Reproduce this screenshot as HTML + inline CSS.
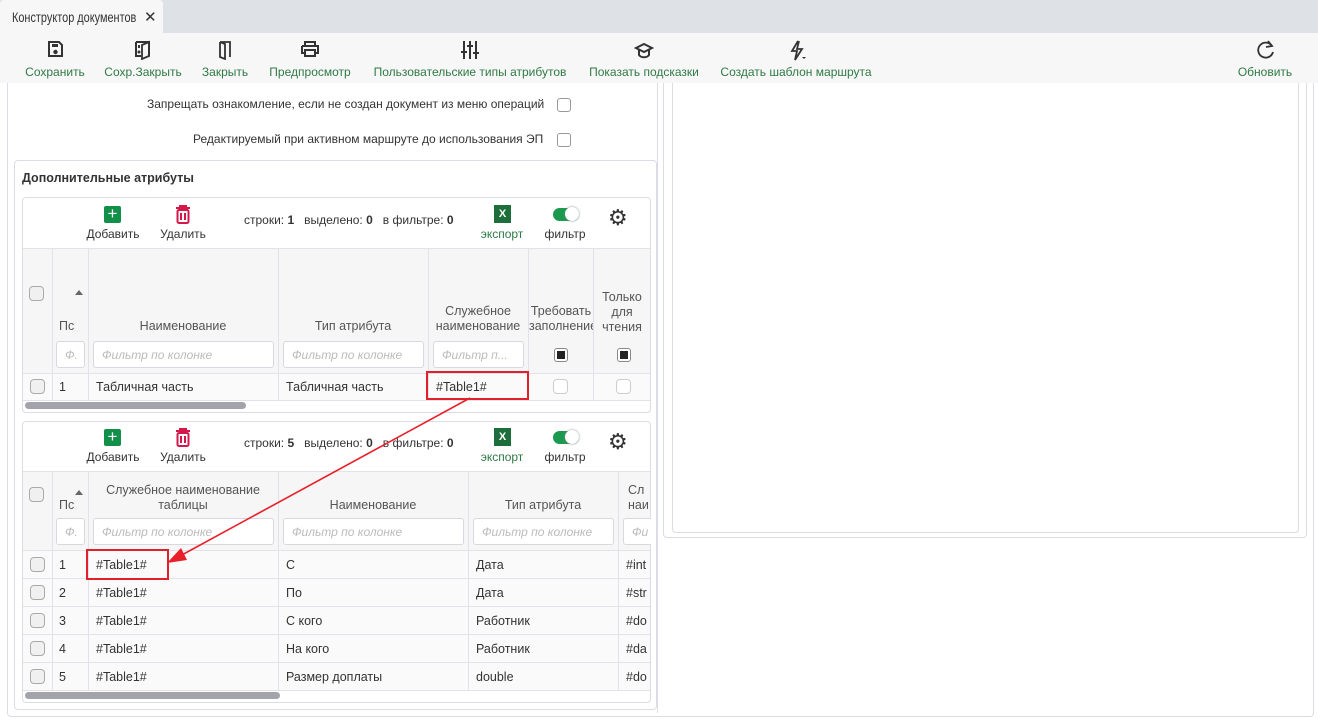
<!DOCTYPE html>
<html><head><meta charset="utf-8">
<style>
*{box-sizing:border-box;margin:0;padding:0}
body{width:1318px;height:720px;position:relative;overflow:hidden;background:#fff;font-family:"Liberation Sans","DejaVu Sans",sans-serif;font-size:12.5px;color:#333}
.a{position:absolute}
.tb{position:absolute;top:65px;color:#2f7a45;font-size:12px;white-space:nowrap;transform:translateX(-50%)}
.ic{position:absolute;top:40px;transform:translateX(-50%)}
.box{position:absolute;border:1px solid #dcdce6;border-radius:4px}
.cb{position:absolute;width:14px;height:14px;border:1px solid #999;border-radius:3px;background:#fff}
.gcb{position:absolute;width:15px;height:15px;border:1px solid #aaa;border-radius:4px;background:#f0f0f0}
.vl{position:absolute;width:1px;background:#e2e2e8}
.hl{position:absolute;height:1px;background:#e2e2e8}
.t{position:absolute;white-space:nowrap}
.hc{position:absolute;text-align:center;color:#555;line-height:15px;overflow:hidden;white-space:nowrap}
.fi{position:absolute;height:27px;border:1px solid #d8d8e0;border-radius:3px;background:#fff;color:#bbb;font-style:italic;font-size:12px;padding:6px 8px;overflow:hidden;white-space:nowrap}
.lbl{position:absolute;font-size:12px;transform:translateX(-50%);white-space:nowrap}
.bk{position:absolute;width:14px;height:14px;border:1px solid #888;border-radius:3px;background:#fff}
.bk::after{content:"";position:absolute;left:2px;top:2px;width:8px;height:8px;background:#222}
</style></head><body>
<!-- tab bar -->
<div class="a" style="left:0;top:0;width:1318px;height:33px;background:#dee1e6"></div>
<div class="a" style="left:0;top:0;width:163px;height:33px;background:#f7f7f7;border-radius:4px 4px 0 0"></div>
<div class="t" style="left:12px;top:9px;font-size:14px;color:#333;transform:scaleX(0.78);transform-origin:left">Конструктор документов</div>
<div class="t" style="left:144px;top:8px;font-size:15px;font-weight:bold;color:#333">✕</div>
<!-- outer panels -->
<div class="box" style="left:7px;top:60px;width:1307px;height:657px"></div>
<div class="box" style="left:663px;top:60px;width:644px;height:478px"></div>
<div class="box" style="left:672px;top:60px;width:627px;height:473px"></div>
<div class="vl" style="left:657px;top:83px;height:630px;background:#dcdce6"></div>
<!-- toolbar -->
<div class="a" style="left:0;top:33px;width:1318px;height:50px;background:#f7f7f7"></div>
<svg class="ic" style="left:55px" width="18" height="18" viewBox="0 0 18 18"><path d="M3 2h10l3 3v11H3z" fill="none" stroke="#333" stroke-width="2"/><rect x="6" y="4" width="6" height="3" fill="#333"/><circle cx="9.5" cy="12" r="2.2" fill="#333"/></svg>
<svg class="ic" style="left:143px" width="20" height="20" viewBox="0 0 20 20"><path d="M3 2h13v14M3 2v14h5" fill="none" stroke="#333" stroke-width="2"/><path d="M9 5l7-3v14l-7 3z" fill="none" stroke="#333" stroke-width="1.8"/><rect x="5" y="5" width="2" height="3" fill="#333"/><circle cx="6" cy="12" r="1.5" fill="#333"/></svg>
<svg class="ic" style="left:225px" width="16" height="20" viewBox="0 0 16 20"><path d="M3 2h10v15M3 2v15l5 2V4L3 2" fill="none" stroke="#333" stroke-width="1.8"/></svg>
<svg class="ic" style="left:310px" width="20" height="18" viewBox="0 0 20 18"><path d="M5 6V2h10v4M2 6h16v7h-3M5 13H2V6" fill="none" stroke="#333" stroke-width="2"/><rect x="5" y="10" width="10" height="6" fill="none" stroke="#333" stroke-width="2"/></svg>
<svg class="ic" style="left:470px" width="18" height="20" viewBox="0 0 18 20"><path d="M3 1v18M9 1v18M15 1v18" stroke="#333" stroke-width="2"/><path d="M0 12h6M6 6h6M12 13h6" stroke="#333" stroke-width="2"/></svg>
<svg class="ic" style="left:644px;top:42px" width="20" height="18" viewBox="0 0 20 18"><path d="M10 2l8 4-8 4-8-4z" fill="none" stroke="#333" stroke-width="2"/><path d="M5 8v5c2 3 8 3 10 0V8" fill="none" stroke="#333" stroke-width="2"/></svg>
<svg class="ic" style="left:798px" width="18" height="22" viewBox="0 0 18 22"><path d="M9 1L3 11h5l-2 9 7-11H8l2-8" fill="none" stroke="#333" stroke-width="1.8"/><path d="M13 17h4l-2 2z" fill="#333"/></svg>
<svg class="ic" style="left:1266px" width="20" height="20" viewBox="0 0 20 20"><path d="M16 6A7.5 7.5 0 1 0 17 12" fill="none" stroke="#333" stroke-width="1.8"/><path d="M12 1l4 5-6 1" fill="none" stroke="#333" stroke-width="1.8"/></svg>
<div class="tb" style="left:55px">Сохранить</div>
<div class="tb" style="left:143px">Сохр.Закрыть</div>
<div class="tb" style="left:225px">Закрыть</div>
<div class="tb" style="left:310px">Предпросмотр</div>
<div class="tb" style="left:470px">Пользовательские типы атрибутов</div>
<div class="tb" style="left:644px">Показать подсказки</div>
<div class="tb" style="left:796px">Создать шаблон маршрута</div>
<div class="tb" style="left:1265px">Обновить</div>
<!-- checkboxes -->
<div class="t" style="left:147px;top:97px;font-size:12px">Запрещать ознакомление, если не создан документ из меню операций</div>
<div class="cb" style="left:557px;top:98px"></div>
<div class="t" style="left:193px;top:132px;font-size:12px">Редактируемый при активном маршруте до использования ЭП</div>
<div class="cb" style="left:557px;top:133px"></div>
<!-- section -->
<div class="box" style="left:14px;top:160px;width:643px;height:550px"></div>
<div class="t" style="left:22px;top:171px;font-weight:bold;font-size:12.5px;color:#333">Дополнительные атрибуты</div>

<!-- GRID 1 -->
<div class="box" style="left:22px;top:197px;width:629px;height:216px"></div>
<div class="a" style="left:23px;top:249px;width:627px;height:124px;background:#f6f6f6"></div>
<div class="a" style="left:23px;top:374px;width:627px;height:27px;background:#fafafa"></div>
<div class="hl" style="left:23px;top:248px;width:627px"></div>
<div class="hl" style="left:23px;top:373px;width:627px"></div>
<div class="hl" style="left:23px;top:400px;width:627px"></div>
<div class="vl" style="left:52px;top:249px;height:151px"></div>
<div class="vl" style="left:88px;top:249px;height:151px"></div>
<div class="vl" style="left:278px;top:249px;height:151px"></div>
<div class="vl" style="left:428px;top:249px;height:151px"></div>
<div class="vl" style="left:528px;top:249px;height:151px"></div>
<div class="vl" style="left:593px;top:249px;height:151px"></div>
<!-- grid1 toolbar -->
<div class="a" style="left:104px;top:206px;width:17px;height:17px;background:#12904a;border-radius:2px;color:#fff;font-size:17px;line-height:16px;text-align:center">+</div>
<svg class="a" style="left:175px;top:205px" width="16" height="19" viewBox="0 0 16 19"><path d="M1 3h14M5 3V1h6v2" stroke="#d4184a" stroke-width="2" fill="none"/><rect x="2.5" y="5" width="11" height="13" rx="1.5" fill="none" stroke="#d4184a" stroke-width="2"/><path d="M6 8v7M10 8v7" stroke="#d4184a" stroke-width="2"/></svg>
<div class="lbl" style="left:113px;top:227px">Добавить</div>
<div class="lbl" style="left:183px;top:227px">Удалить</div>
<div class="t" style="left:244px;top:213px;font-size:12px">строки: <b>1</b>&nbsp;&nbsp; выделено: <b>0</b>&nbsp;&nbsp; в фильтре: <b>0</b></div>
<div class="a" style="left:494px;top:205px;width:17px;height:18px;background:#1e6e3c;color:#fff;font-size:11px;font-weight:bold;text-align:center;line-height:18px">X</div>
<div class="lbl" style="left:502px;top:227px;color:#2f7a45">экспорт</div>
<div class="a" style="left:553px;top:208px;width:26px;height:13px;background:#1b9a4f;border-radius:7px"></div>
<div class="a" style="left:565px;top:207px;width:14px;height:14px;background:#fff;border-radius:50%;box-shadow:0 0 2px #888"></div>
<div class="lbl" style="left:565px;top:227px">фильтр</div>
<div class="t" style="left:608px;top:207px;font-size:22px;color:#333;line-height:22px">⚙</div>
<!-- grid1 header -->
<div class="gcb" style="left:29px;top:286px"></div>
<div class="a" style="left:75px;top:290px;width:0;height:0;border-left:4px solid transparent;border-right:4px solid transparent;border-bottom:5px solid #666"></div>
<div class="hc" style="left:55px;top:319px;width:25px;text-align:left;padding-left:4px">Пс</div>
<div class="hc" style="left:88px;top:319px;width:190px">Наименование</div>
<div class="hc" style="left:278px;top:319px;width:150px">Тип атрибута</div>
<div class="hc" style="left:428px;top:304px;width:100px">Служебное<br>наименование</div>
<div class="hc" style="left:529px;top:304px;width:64px">Требовать<br>заполнение</div>
<div class="hc" style="left:594px;top:290px;width:56px">Только<br>для<br>чтения</div>
<div class="fi" style="left:56px;top:341px;width:29px;padding-left:8px">Ф.</div>
<div class="fi" style="left:93px;top:341px;width:181px">Фильтр по колонке</div>
<div class="fi" style="left:283px;top:341px;width:141px">Фильтр по колонке</div>
<div class="fi" style="left:433px;top:341px;width:91px">Фильтр п...</div>
<div class="bk" style="left:554px;top:348px"></div>
<div class="bk" style="left:617px;top:348px"></div>
<!-- grid1 row -->
<div class="gcb" style="left:30px;top:379px"></div>
<div class="t" style="left:59px;top:380px">1</div>
<div class="t" style="left:96px;top:380px">Табличная часть</div>
<div class="t" style="left:286px;top:380px">Табличная часть</div>
<div class="t" style="left:436px;top:380px">#Table1#</div>
<div class="cb" style="left:553px;top:379px;border-color:#ccc;border-radius:4px;width:15px;height:15px"></div>
<div class="cb" style="left:616px;top:379px;border-color:#ccc;border-radius:4px;width:15px;height:15px"></div>
<div class="a" style="left:25px;top:402px;width:221px;height:7px;background:#a2a3ab;border-radius:4px"></div>
<div class="a" style="left:426px;top:371px;width:103px;height:29px;border:2px solid #e0202a"></div>

<!-- GRID 2 -->
<div class="box" style="left:22px;top:421px;width:629px;height:282px"></div>
<div class="a" style="left:23px;top:472px;width:627px;height:78px;background:#f6f6f6"></div>
<div class="a" style="left:23px;top:551px;width:627px;height:140px;background:#fafafa"></div>
<div class="hl" style="left:23px;top:471px;width:627px"></div>
<div class="hl" style="left:23px;top:550px;width:627px"></div>
<div class="hl" style="left:23px;top:578px;width:627px"></div>
<div class="hl" style="left:23px;top:606px;width:627px"></div>
<div class="hl" style="left:23px;top:634px;width:627px"></div>
<div class="hl" style="left:23px;top:662px;width:627px"></div>
<div class="hl" style="left:23px;top:690px;width:627px"></div>
<div class="vl" style="left:52px;top:472px;height:218px"></div>
<div class="vl" style="left:88px;top:472px;height:218px"></div>
<div class="vl" style="left:278px;top:472px;height:218px"></div>
<div class="vl" style="left:468px;top:472px;height:218px"></div>
<div class="vl" style="left:618px;top:472px;height:218px"></div>
<!-- grid2 toolbar -->
<div class="a" style="left:104px;top:429px;width:17px;height:17px;background:#12904a;border-radius:2px;color:#fff;font-size:17px;line-height:16px;text-align:center">+</div>
<svg class="a" style="left:175px;top:428px" width="16" height="19" viewBox="0 0 16 19"><path d="M1 3h14M5 3V1h6v2" stroke="#d4184a" stroke-width="2" fill="none"/><rect x="2.5" y="5" width="11" height="13" rx="1.5" fill="none" stroke="#d4184a" stroke-width="2"/><path d="M6 8v7M10 8v7" stroke="#d4184a" stroke-width="2"/></svg>
<div class="lbl" style="left:113px;top:450px">Добавить</div>
<div class="lbl" style="left:183px;top:450px">Удалить</div>
<div class="t" style="left:244px;top:436px;font-size:12px">строки: <b>5</b>&nbsp;&nbsp; выделено: <b>0</b>&nbsp;&nbsp; в фильтре: <b>0</b></div>
<div class="a" style="left:494px;top:428px;width:17px;height:18px;background:#1e6e3c;color:#fff;font-size:11px;font-weight:bold;text-align:center;line-height:18px">X</div>
<div class="lbl" style="left:502px;top:450px;color:#2f7a45">экспорт</div>
<div class="a" style="left:553px;top:431px;width:26px;height:13px;background:#1b9a4f;border-radius:7px"></div>
<div class="a" style="left:565px;top:430px;width:14px;height:14px;background:#fff;border-radius:50%;box-shadow:0 0 2px #888"></div>
<div class="lbl" style="left:565px;top:450px">фильтр</div>
<div class="t" style="left:608px;top:431px;font-size:22px;color:#333;line-height:22px">⚙</div>
<!-- grid2 header -->
<div class="gcb" style="left:29px;top:487px"></div>
<div class="a" style="left:75px;top:490px;width:0;height:0;border-left:4px solid transparent;border-right:4px solid transparent;border-bottom:5px solid #666"></div>
<div class="hc" style="left:55px;top:498px;width:25px;text-align:left;padding-left:4px">Пс</div>
<div class="hc" style="left:88px;top:483px;width:190px">Служебное наименование<br>таблицы</div>
<div class="hc" style="left:278px;top:498px;width:190px">Наименование</div>
<div class="hc" style="left:468px;top:498px;width:150px">Тип атрибута</div>
<div class="hc" style="left:628px;top:483px;width:22px;text-align:left">Сл<br>наи</div>
<div class="fi" style="left:56px;top:518px;width:29px">Ф.</div>
<div class="fi" style="left:93px;top:518px;width:181px">Фильтр по колонке</div>
<div class="fi" style="left:283px;top:518px;width:181px">Фильтр по колонке</div>
<div class="fi" style="left:473px;top:518px;width:141px">Фильтр по колонке</div>
<div class="fi" style="left:623px;top:518px;width:28px;border-right:none;border-radius:3px 0 0 3px">Фи</div>
<!-- grid2 rows -->
<div class="gcb" style="left:30px;top:557px"></div><div class="t" style="left:59px;top:558px">1</div><div class="t" style="left:96px;top:558px">#Table1#</div><div class="t" style="left:286px;top:558px">С</div><div class="t" style="left:476px;top:558px">Дата</div><div class="t" style="left:626px;top:558px;width:24px;overflow:hidden">#int</div>
<div class="gcb" style="left:30px;top:585px"></div><div class="t" style="left:59px;top:586px">2</div><div class="t" style="left:96px;top:586px">#Table1#</div><div class="t" style="left:286px;top:586px">По</div><div class="t" style="left:476px;top:586px">Дата</div><div class="t" style="left:626px;top:586px;width:24px;overflow:hidden">#str</div>
<div class="gcb" style="left:30px;top:613px"></div><div class="t" style="left:59px;top:614px">3</div><div class="t" style="left:96px;top:614px">#Table1#</div><div class="t" style="left:286px;top:614px">С кого</div><div class="t" style="left:476px;top:614px">Работник</div><div class="t" style="left:626px;top:614px;width:24px;overflow:hidden">#do</div>
<div class="gcb" style="left:30px;top:641px"></div><div class="t" style="left:59px;top:642px">4</div><div class="t" style="left:96px;top:642px">#Table1#</div><div class="t" style="left:286px;top:642px">На кого</div><div class="t" style="left:476px;top:642px">Работник</div><div class="t" style="left:626px;top:642px;width:24px;overflow:hidden">#da</div>
<div class="gcb" style="left:30px;top:669px"></div><div class="t" style="left:59px;top:670px">5</div><div class="t" style="left:96px;top:670px">#Table1#</div><div class="t" style="left:286px;top:670px">Размер доплаты</div><div class="t" style="left:476px;top:670px">double</div><div class="t" style="left:626px;top:670px;width:24px;overflow:hidden">#do</div>
<div class="a" style="left:25px;top:692px;width:255px;height:7px;background:#a2a3ab;border-radius:4px"></div>
<div class="a" style="left:86px;top:549px;width:83px;height:31px;border:2px solid #e0202a"></div>
<!-- arrow -->
<svg class="a" style="left:0;top:0" width="700" height="720"><line x1="470" y1="398" x2="180" y2="556" stroke="#e8202a" stroke-width="1.6"/><path d="M167 563L181 548L187 560Z" fill="#e8202a"/></svg>
</body></html>
